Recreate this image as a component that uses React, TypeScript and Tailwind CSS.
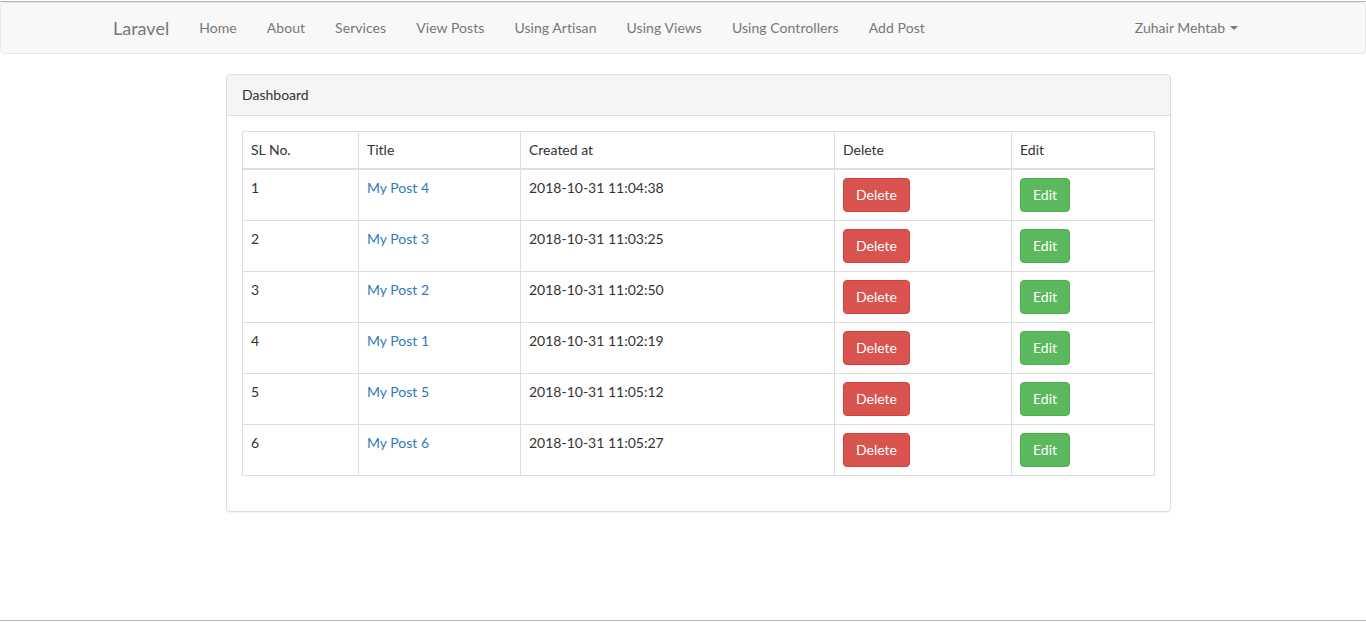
import React from "react";

const rows = [
  { n: 1, t: "My Post 4", c: "2018-10-31 11:04:38" },
  { n: 2, t: "My Post 3", c: "2018-10-31 11:03:25" },
  { n: 3, t: "My Post 2", c: "2018-10-31 11:02:50" },
  { n: 4, t: "My Post 1", c: "2018-10-31 11:02:19" },
  { n: 5, t: "My Post 5", c: "2018-10-31 11:05:12" },
  { n: 6, t: "My Post 6", c: "2018-10-31 11:05:27" },
];

const navItems = ["Home", "About", "Services", "View Posts", "Using Artisan", "Using Views", "Using Controllers", "Add Post"];

export default function App() {
  return (
    <div className="relative min-h-[622px] bg-white text-[14px] leading-[20px] text-[#333]" style={{ fontFamily: "Lato, 'Open Sans', sans-serif" }}>
      <div className="h-px bg-white" />
      <div className="h-px bg-[#b4b4b4]" />
      <nav className="h-[52px] border border-[#e7e7e7] bg-[#f8f8f8] rounded-[4px]">
        <div className="w-[1170px] mx-auto px-[15px] flex items-center h-[50px]">
          <a className="-ml-[15px] px-[15px] text-[18px] leading-[20px] text-[#777]">Laravel</a>
          <ul className="flex tracking-[0.06px]">
            {navItems.map((n) => (
              <li key={n}>
                <a className="block px-[15px] py-[15px] text-[#777]">{n}</a>
              </li>
            ))}
          </ul>
          <div className="ml-auto pr-[15px] text-[#777] flex items-center">
            Zuhair Mehtab
            <span className="ml-[5px] inline-block w-0 h-0 border-l-[4px] border-r-[4px] border-t-[4px] border-l-transparent border-r-transparent border-t-[#777]" />
          </div>
        </div>
      </nav>
      <div className="mt-[20px] flex">
        <div className="ml-[226px] w-[945px] border border-[#ddd] rounded-[4px] bg-white shadow-[0_1px_1px_rgba(0,0,0,0.05)]">
          <div className="h-[41px] px-[15px] py-[10px] bg-[#f5f5f5] border-b border-[#ddd] rounded-t-[3px]">Dashboard</div>
          <div className="p-[15px]">
            <table className="w-[913px] border-collapse border border-[#ddd] mb-[20px]">
              <thead>
                <tr>
                  <th className="w-[116px] text-left font-normal p-[8px] border border-[#ddd] border-b-2">SL No.</th>
                  <th className="w-[162px] text-left font-normal p-[8px] border border-[#ddd] border-b-2">Title</th>
                  <th className="w-[314px] text-left font-normal p-[8px] border border-[#ddd] border-b-2">Created at</th>
                  <th className="w-[177px] text-left font-normal p-[8px] border border-[#ddd] border-b-2">Delete</th>
                  <th className="text-left font-normal p-[8px] border border-[#ddd] border-b-2">Edit</th>
                </tr>
              </thead>
              <tbody>
                {rows.map((r) => (
                  <tr key={r.n}>
                    <td className="align-top p-[8px] border border-[#ddd]">{r.n}</td>
                    <td className="align-top p-[8px] border border-[#ddd] text-[#337ab7]">{r.t}</td>
                    <td className="align-top p-[8px] border border-[#ddd]">{r.c}</td>
                    <td className="align-top p-[8px] border border-[#ddd]">
                      <button className="h-[34px] px-[12px] py-[6px] text-white bg-[#d9534f] border border-[#d43f3a] rounded-[4px] leading-[20px]">Delete</button>
                    </td>
                    <td className="align-top p-[8px] border border-[#ddd]">
                      <button className="h-[34px] px-[12px] py-[6px] text-white bg-[#5cb85c] border border-[#4cae4c] rounded-[4px] leading-[20px]">Edit</button>
                    </td>
                  </tr>
                ))}
              </tbody>
            </table>
          </div>
        </div>
      </div>
      <div className="absolute left-0 right-0 top-[620px] h-px bg-[#b4b4b4]" />
    </div>
  );
}
